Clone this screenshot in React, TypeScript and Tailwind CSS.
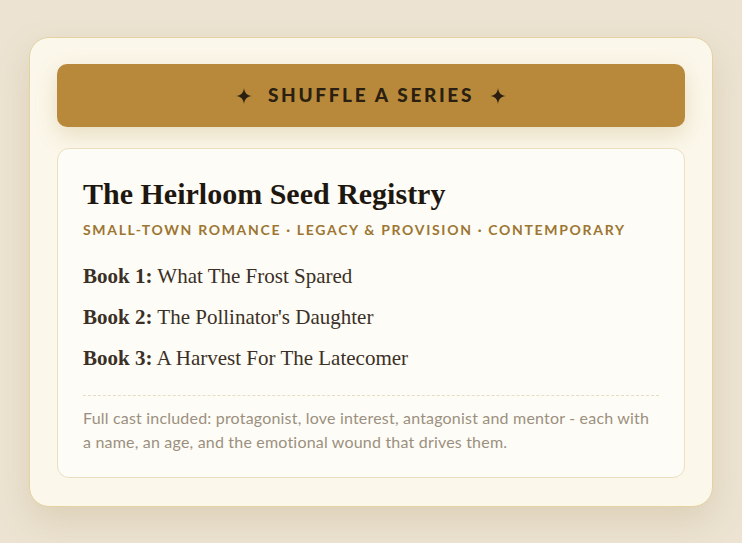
import React from "react";

const books = [
  { n: 1, title: "What The Frost Spared" },
  { n: 2, title: "The Pollinator's Daughter" },
  { n: 3, title: "A Harvest For The Latecomer" },
];

function Sparkle() {
  return (
    <svg width="16" height="16" viewBox="0 0 16 16" className="fill-[#2a1f10]">
      <path d="M8 0 C8.6 5 11 7.4 16 8 C11 8.6 8.6 11 8 16 C7.4 11 5 8.6 0 8 C5 7.4 7.4 5 8 0 Z" />
    </svg>
  );
}

export default function App() {
  return (
    <div className="min-h-screen w-full bg-[#ece3d2] px-[29px] pt-[37px] font-['Lato','Noto_Sans',sans-serif]">
      <div className="w-[684px] rounded-[20px] border border-[#e4d2a2] bg-[#fbf7ea] px-[27px] pt-[26px] pb-[28px] shadow-[0_14px_34px_rgba(150,120,60,0.18)]">
        <button className="flex h-[63px] w-full items-center justify-center gap-[16px] rounded-[10px] bg-[#b8893a] shadow-[0_8px_22px_rgba(170,130,50,0.22)]">
          <Sparkle />
          <span className="text-[19px] font-black tracking-[0.14em] text-[#2a1f10]">
            SHUFFLE A SERIES
          </span>
          <Sparkle />
        </button>

        <div className="mt-[21px] rounded-[12px] border border-[#ecdfbf] bg-[#fefcf6] px-[25px] pt-[28px] pb-[23px]">
          <h1 className="font-['Liberation_Serif',serif] text-[30px] leading-[34px] font-bold text-[#1e1710]">
            The Heirloom Seed Registry
          </h1>
          <div className="mt-[10px] text-[14px] leading-[18px] font-bold tracking-[0.12em] text-[#9c7632]">
            SMALL-TOWN ROMANCE · LEGACY &amp; PROVISION · CONTEMPORARY
          </div>

          <div className="mt-[25px] flex flex-col gap-[16px] font-['Liberation_Serif',serif] text-[21px] leading-[25px] text-[#3a3027]">
            {books.map((b) => (
              <div key={b.n}>
                <span className="font-bold">Book {b.n}:</span> {b.title}
              </div>
            ))}
          </div>

          <div className="mt-[24px] border-t border-dashed border-[#e6dcc4]" />

          <p className="mt-[10px] text-[16px] leading-[24px] tracking-[0.012em] text-[#9b9080]">
            Full cast included: protagonist, love interest, antagonist and mentor - each with
            a name, an age, and the emotional wound that drives them.
          </p>
        </div>
      </div>
    </div>
  );
}
